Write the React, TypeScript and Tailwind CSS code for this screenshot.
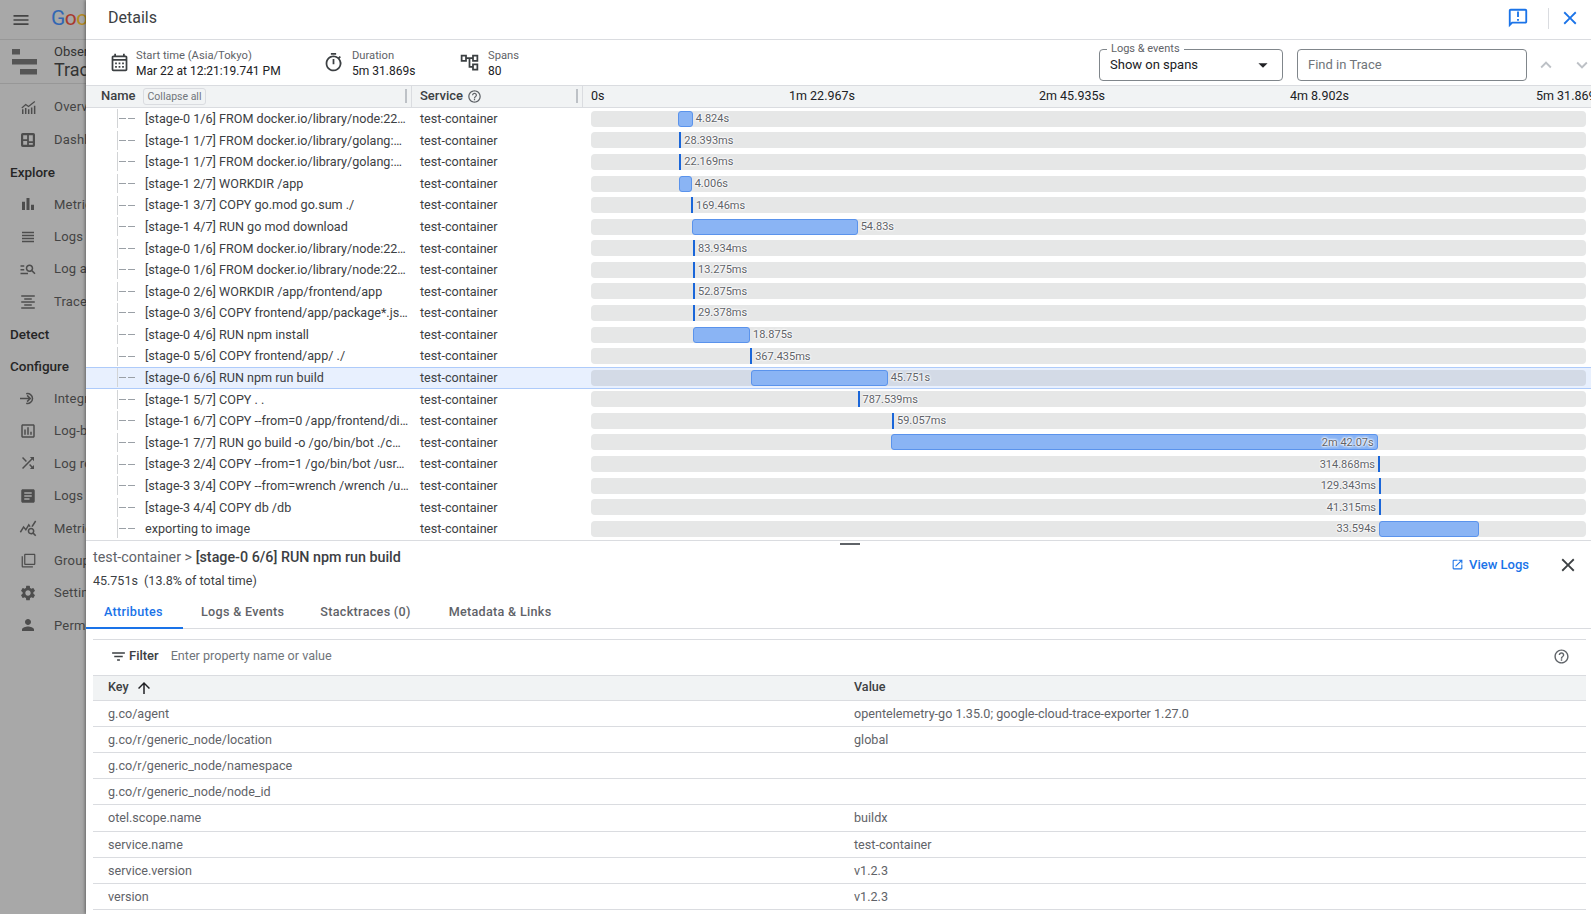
import type { ReactNode } from "react";
import {
  MdArrowDropDown,
  MdArrowUpward,
  MdArticle,
  MdBarChart,
  MdClose,
  MdExpandLess,
  MdExpandMore,
  MdFilterList,
  MdFilterNone,
  MdFormatAlignCenter,
  MdHelpOutline,
  MdManageSearch,
  MdMenu,
  MdOpenInNew,
  MdOutlineAccountTree,
  MdOutlineAnnouncement,
  MdOutlineAssessment,
  MdOutlineCalendarMonth,
  MdOutlineQueryStats,
  MdOutlineTimer,
  MdOutlineViewHeadline,
  MdPerson,
  MdSettings,
  MdShuffle,
} from "react-icons/md";

const BAR_LEFT = 591;

type Span = {
  name: string;
  left: number;
  right: number;
  label: string;
  labelEnd?: number;
  selected?: boolean;
};

const spans: Span[] = [
  { name: "[stage-0 1/6] FROM docker.io/library/node:22…", left: 678.3, right: 692.8, label: "4.824s" },
  { name: "[stage-1 1/7] FROM docker.io/library/golang:…", left: 679.3, right: 681.3, label: "28.393ms" },
  { name: "[stage-1 1/7] FROM docker.io/library/golang:…", left: 679.3, right: 681.3, label: "22.169ms" },
  { name: "[stage-1 2/7] WORKDIR /app", left: 679.3, right: 691.7, label: "4.006s" },
  { name: "[stage-1 3/7] COPY go.mod go.sum ./", left: 691, right: 693, label: "169.46ms" },
  { name: "[stage-1 4/7] RUN go mod download", left: 692.3, right: 857.7, label: "54.83s" },
  { name: "[stage-0 1/6] FROM docker.io/library/node:22…", left: 693, right: 695, label: "83.934ms" },
  { name: "[stage-0 1/6] FROM docker.io/library/node:22…", left: 693, right: 695, label: "13.275ms" },
  { name: "[stage-0 2/6] WORKDIR /app/frontend/app", left: 693, right: 695, label: "52.875ms" },
  { name: "[stage-0 3/6] COPY frontend/app/package*.js…", left: 693, right: 695, label: "29.378ms" },
  { name: "[stage-0 4/6] RUN npm install", left: 693.3, right: 750, label: "18.875s" },
  { name: "[stage-0 5/6] COPY frontend/app/ ./", left: 750.2, right: 752.2, label: "367.435ms" },
  { name: "[stage-0 6/6] RUN npm run build", left: 751.3, right: 887.7, label: "45.751s", selected: true },
  { name: "[stage-1 5/7] COPY . .", left: 857.5, right: 859.5, label: "787.539ms" },
  { name: "[stage-1 6/7] COPY --from=0 /app/frontend/di…", left: 892, right: 894, label: "59.057ms" },
  { name: "[stage-1 7/7] RUN go build -o /go/bin/bot ./c…", left: 891, right: 1378, label: "2m 42.07s", labelEnd: 1373.7 },
  { name: "[stage-3 2/4] COPY --from=1 /go/bin/bot /usr…", left: 1378.3, right: 1380.3, label: "314.868ms", labelEnd: 1375 },
  { name: "[stage-3 3/4] COPY --from=wrench /wrench /u…", left: 1379.3, right: 1381.3, label: "129.343ms", labelEnd: 1376 },
  { name: "[stage-3 4/4] COPY db /db", left: 1379.3, right: 1381.3, label: "41.315ms", labelEnd: 1376 },
  { name: "exporting to image", left: 1379.3, right: 1479.3, label: "33.594s", labelEnd: 1376 },
];

const attributes = [
  ["g.co/agent", "opentelemetry-go 1.35.0; google-cloud-trace-exporter 1.27.0"],
  ["g.co/r/generic_node/location", "global"],
  ["g.co/r/generic_node/namespace", ""],
  ["g.co/r/generic_node/node_id", ""],
  ["otel.scope.name", "buildx"],
  ["service.name", "test-container"],
  ["service.version", "v1.2.3"],
  ["version", "v1.2.3"],
];

function OverviewIcon() {
  return (
    <svg viewBox="0 0 16 14" className="h-[13px] w-[15px]" fill="currentColor">
      <path d="M1 9h1.6v5H1zM4.2 7.5h1.6V14H4.2zM7.4 9h1.6v5H7.4zM10.600 7h1.6v7h-1.6zM13.800 5h1.6v9h-1.600z" />
      <path d="M.8 7.500 5 3.800l3 2.200L14.800.6" fill="none" stroke="currentColor" strokeWidth="1.300" />
    </svg>
  );
}

function DashboardIcon() {
  return (
    <svg viewBox="0 0 16 16" className="h-[14px] w-[14px]" fill="currentColor">
      <path d="M2 0h12a2 2 0 0 1 2 2v12a2 2 0 0 1-2 2H2a2 2 0 0 1-2-2V2a2 2 0 0 1 2-2zm.500 2.500v4.500h4.500V2.500zm6.500 0v7h4.500v-7zm-6.500 6.500v4.500h4.500V9zm6.500 2.500v2h4.500v-2z" fillRule="evenodd" />
    </svg>
  );
}

function IntegrationIcon() {
  return (
    <svg viewBox="0 0 18 14" className="h-[13px] w-[16px]" fill="none" stroke="currentColor" strokeWidth="1.700">
      <path d="M0 7h11M8 3.500 11.500 7 8 10.500" />
      <path d="M7 1.600a5.600 5.600 0 1 1 0 10.800" />
    </svg>
  );
}

function TraceLogo() {
  return (
    <svg viewBox="0 0 25 26" className="h-[26px] w-[25px] shrink-0" fill="#555555">
      <rect x="0" y="0" width="8" height="5.500" />
      <rect x="0" y="10" width="25" height="5.500" />
      <rect x="8" y="20" width="17" height="5.500" />
    </svg>
  );
}

function NavItem({ icon, label }: { icon: ReactNode; label: string }) {
  return (
    <div className="flex h-[32.4px] items-center text-[#444444]">
      <span className="flex w-[54px] shrink-0 justify-center pl-[2px] text-[18px] text-[#4d4d4d]">{icon}</span>
      <span className="whitespace-nowrap text-[13px] tracking-[0.2px]">{label}</span>
    </div>
  );
}

function NavHeading({ label }: { label: string }) {
  return (
    <div className="flex h-[32.4px] items-center pl-[10px] text-[13.500px] font-medium text-[#262626]">{label}</div>
  );
}

function Sidebar() {
  return (
    <aside className="w-[86px] shrink-0 overflow-hidden bg-[#a8a8a8]">
      <div className="flex h-[40px] items-center border-b border-[#979797] pl-[11px]">
        <MdMenu className="h-[20px] w-[20px] shrink-0 text-[#444444]" />
        <span className="ml-[20px] shrink-0 whitespace-nowrap pb-[3px] text-[21px] leading-none tracking-[-0.5px]">
          <span className="text-[#3367b3]">G</span>
          <span className="text-[#a83a2e]">o</span>
          <span className="text-[#b58a20]">o</span>
          <span className="text-[#3367b3]">g</span>
        </span>
      </div>
      <div className="flex h-[44px] items-center border-b border-[#979797] pl-[12px]">
        <TraceLogo />
        <div className="ml-[17px] shrink-0 whitespace-nowrap text-[#333333]">
          <div className="text-[13px] leading-[17px]">Observability</div>
          <div className="text-[18px] leading-[20px]">Trace</div>
        </div>
      </div>
      <nav className="pt-[7px]">
        <NavItem icon={<OverviewIcon />} label="Overview" />
        <NavItem icon={<DashboardIcon />} label="Dashboards" />
        <NavHeading label="Explore" />
        <NavItem icon={<MdBarChart />} label="Metrics explorer" />
        <NavItem icon={<MdOutlineViewHeadline />} label="Logs explorer" />
        <NavItem icon={<MdManageSearch />} label="Log analytics" />
        <NavItem icon={<MdFormatAlignCenter />} label="Trace explorer" />
        <NavHeading label="Detect" />
        <NavHeading label="Configure" />
        <NavItem icon={<IntegrationIcon />} label="Integrations" />
        <NavItem icon={<MdOutlineAssessment />} label="Log-based metrics" />
        <NavItem icon={<MdShuffle />} label="Log router" />
        <NavItem icon={<MdArticle />} label="Logs storage" />
        <NavItem icon={<MdOutlineQueryStats />} label="Metrics scope" />
        <NavItem icon={<MdFilterNone className="h-[15px] w-[15px]" />} label="Groups" />
        <NavItem icon={<MdSettings />} label="Settings" />
        <NavItem icon={<MdPerson />} label="Permissions" />
      </nav>
    </aside>
  );
}

function Stat({ icon, label, value, className }: { icon: ReactNode; label: string; value: string; className: string }) {
  return (
    <div className={`flex items-center ${className}`}>
      <span className="flex w-[27px] shrink-0 text-[21px] text-[#3c4043]">{icon}</span>
      <div className="pt-[2px]">
        <div className="text-[11.200px] leading-[14px] text-[#5f6368]">{label}</div>
        <div className="text-[12px] leading-[16px] text-[#202124]">{value}</div>
      </div>
    </div>
  );
}

function TopBars() {
  return (
    <>
      <header className="flex h-[40px] shrink-0 items-center border-b border-[#dadce0] pb-[3px] pl-[22px] pr-[10px]">
        <h1 className="flex-1 text-[16px] text-[#3c4043]">Details</h1>
        <MdOutlineAnnouncement className="h-[22px] w-[22px] text-[#1a73e8]" />
        <span className="ml-[19px] h-[21px] w-px bg-[#dadce0]" />
        <MdClose className="ml-[10px] h-[22px] w-[22px] text-[#1a73e8]" />
      </header>
      <div className="flex h-[45px] shrink-0 items-center pl-[23px]">
        <Stat icon={<MdOutlineCalendarMonth />} label="Start time (Asia/Tokyo)" value="Mar 22 at 12:21:19.741 PM" className="w-[216px]" />
        <Stat icon={<MdOutlineTimer className="-ml-[2px]" />} label="Duration" value="5m 31.869s" className="w-[136px]" />
        <Stat icon={<MdOutlineAccountTree className="-ml-[2px]" />} label="Spans" value="80" className="flex-1" />
        <div className="relative mt-[4px] flex h-[32px] w-[184px] items-center rounded-[4px] border border-[#80868b] pl-[10px] pr-[8px]">
          <span className="absolute left-[7px] top-[-8px] bg-white px-[4px] text-[11px] leading-[14px] text-[#5f6368]">Logs &amp; events</span>
          <span className="flex-1 text-[13px] text-[#202124]">Show on spans</span>
          <MdArrowDropDown className="h-[22px] w-[22px] text-[#202124]" />
        </div>
        <div className="ml-[14px] mt-[4px] flex h-[32px] w-[230px] items-center rounded-[4px] border border-[#80868b] pl-[10px] text-[13px] text-[#70757a]">
          Find in Trace
        </div>
        <MdExpandLess className="ml-[8px] mt-[4px] h-[22px] w-[22px] shrink-0 text-[#bdc1c6]" />
        <MdExpandMore className="ml-[14px] mr-[-2px] mt-[4px] h-[22px] w-[22px] shrink-0 text-[#bdc1c6]" />
      </div>
    </>
  );
}

function TimelineHeader() {
  return (
    <div className="box-content flex h-[21px] shrink-0 items-center overflow-hidden border-y border-[#dadce0] bg-[#f1f3f4] text-[12.500px] text-[#202124]">
      <div className="flex h-full w-[326px] shrink-0 items-center border-r border-[#dadce0] pb-[1px] pl-[15px]">
        <span className="text-[13px] font-medium text-[#3c4043]">Name</span>
        <span className="ml-[7px] rounded-[3px] border border-[#dadce0] px-[4px] text-[10.500px] leading-[15px] text-[#70757a]">Collapse all</span>
        <span className="ml-auto mr-[4px] h-[14px] w-[2px] bg-[#bdc1c6]" />
      </div>
      <div className="flex h-full w-[171px] shrink-0 items-center border-r border-[#dadce0] pb-[1px] pl-[8px]">
        <span className="text-[13px] font-medium text-[#3c4043]">Service</span>
        <MdHelpOutline className="ml-[4px] h-[15px] w-[15px] text-[#5f6368]" />
        <span className="ml-auto mr-[4px] h-[14px] w-[2px] bg-[#bdc1c6]" />
      </div>
      <div className="flex whitespace-nowrap pl-[8px]">
        <span className="w-[198px] shrink-0">0s</span>
        <span className="w-[250px] shrink-0">1m 22.967s</span>
        <span className="w-[251px] shrink-0">2m 45.935s</span>
        <span className="w-[246px] shrink-0">4m 8.902s</span>
        <span className="shrink-0">5m 31.869s</span>
      </div>
    </div>
  );
}

function SpanBar({ span }: { span: Span }) {
  const width = span.right - span.left;
  const isMarker = width < 3;
  return (
    <div className={`relative h-4 w-[995px] rounded-[4px] ${span.selected ? "bg-[#d3dae6]" : "bg-[#e6e7e7]"}`}>
      <div
        className={isMarker ? "absolute inset-y-0 bg-[#1a66d9]" : "absolute inset-y-0 rounded-[3px] border border-[#5a93ec] bg-[#8ab4f4]"}
        style={{ left: span.left - BAR_LEFT, width }}
      />
      <span
        className="absolute top-[1.500px] whitespace-nowrap text-[11px] leading-[14px] text-[#5f6368] [text-shadow:0_0_2px_#fff,0_0_2px_#fff,0_0_3px_#fff,0_0_3px_#fff]"
        style={
          span.labelEnd
            ? { right: BAR_LEFT + 995 - span.labelEnd }
            : { left: span.right - BAR_LEFT + 3 }
        }
      >
        {span.label}
      </span>
    </div>
  );
}

function SpanRow({ span }: { span: Span }) {
  return (
    <div
      className={`flex h-[21.58px] items-center text-[12.600px] text-[#3c4043] ${
        span.selected ? "bg-[#e8f0fe] shadow-[inset_0_1px_0_#aecbfa,inset_0_-1px_0_#aecbfa]" : ""
      }`}
    >
      <div className="flex h-full w-[326px] shrink-0 items-center overflow-hidden pl-[31px]">
        <span className="flex h-[19px] w-[28px] shrink-0 items-center gap-[2px] border-l border-[#d2d4d6] pl-[1px]">
          <span className="h-px w-[7px] bg-[#9aa0a6]" />
          <span className="h-px w-[7px] bg-[#9aa0a6]" />
        </span>
        <span className="whitespace-nowrap pt-[1.500px]">{span.name}</span>
      </div>
      <div className="w-[171px] shrink-0 pl-[8px] pt-[1.500px]">test-container</div>
      <div className="pl-[8px]">
        <SpanBar span={span} />
      </div>
    </div>
  );
}

function SpanDetails() {
  return (
    <div className="relative flex-1 overflow-hidden border-t border-[#dadce0]">
      <span className="absolute left-[754px] top-[2px] h-[2px] w-[20px] bg-[#5f6368]" />
      <div className="flex items-start pl-[7px] pr-[12px] pt-[6px]">
        <div className="flex-1">
          <div className="text-[14.300px] leading-[20px] text-[#5f6368]">
            test-container &gt; <span className="font-medium text-[#3c4043]">[stage-0 6/6] RUN npm run build</span>
          </div>
          <div className="mt-[5px] whitespace-pre text-[12.500px] leading-[18px] text-[#3c4043]">45.751s  (13.8% of total time)</div>
        </div>
        <div className="mt-[8px] flex items-center text-[13px] font-medium text-[#1a73e8]">
          <MdOpenInNew className="h-[13px] w-[13px]" />
          <span className="ml-[5px]">View Logs</span>
        </div>
        <MdClose className="ml-[28px] mt-[7px] h-[22px] w-[22px] text-[#3c4043]" />
      </div>
      <div className="mt-[7px] flex h-[32px] items-center border-b border-[#dadce0] text-[12.600px] font-medium tracking-[0.3px] text-[#5f6368]">
        <div className="relative flex h-full w-[97px] items-center pl-[18px] text-[#1a73e8]">
          Attributes
          <span className="absolute inset-x-0 bottom-[-1px] h-[2px] bg-[#1a73e8]" />
        </div>
        <span className="ml-[18px]">Logs &amp; Events</span>
        <span className="ml-[36px]">Stacktraces (0)</span>
        <span className="ml-[38px]">Metadata &amp; Links</span>
      </div>
      <div className="ml-[7px] mr-[5px] mt-[10px] border-t border-[#dadce0]">
        <div className="flex h-[35px] items-center pb-[2px] pl-[17px] pr-[16px] text-[12.600px]">
          <MdFilterList className="h-[17px] w-[17px] text-[#3c4043]" />
          <span className="ml-[2px] text-[13px] font-medium text-[#3c4043]">Filter</span>
          <span className="ml-[12px] flex-1 text-[#70757a]">Enter property name or value</span>
          <MdHelpOutline className="h-[17px] w-[17px] text-[#5f6368]" />
        </div>
        <div className="flex h-[26px] items-center border-y border-[#dadce0] bg-[#f1f3f4] text-[12.600px] font-medium text-[#3c4043]">
          <div className="flex w-[761px] items-center pl-[15px]">
            Key
            <MdArrowUpward className="ml-[6px] h-[18px] w-[18px] text-[#202124]" />
          </div>
          <div>Value</div>
        </div>
        {attributes.map(([key, value]) => (
          <div key={key} className="flex h-[26.2px] items-center border-b border-[#dadce0] pt-[2px] text-[12.600px] text-[#5f6368]">
            <div className="w-[761px] pl-[15px]">{key}</div>
            <div>{value}</div>
          </div>
        ))}
      </div>
    </div>
  );
}

export default function App() {
  return (
    <div className="flex h-[914px] w-[1591px] overflow-hidden bg-white font-['Roboto',sans-serif]">
      <Sidebar />
      <main className="flex min-w-0 flex-1 flex-col shadow-[-1px_0_3px_rgba(0,0,0,0.4)]">
        <TopBars />
        <TimelineHeader />
        <div className="shrink-0">
          {spans.map((span, index) => (
            <SpanRow key={index} span={span} />
          ))}
        </div>
        <SpanDetails />
      </main>
    </div>
  );
}
